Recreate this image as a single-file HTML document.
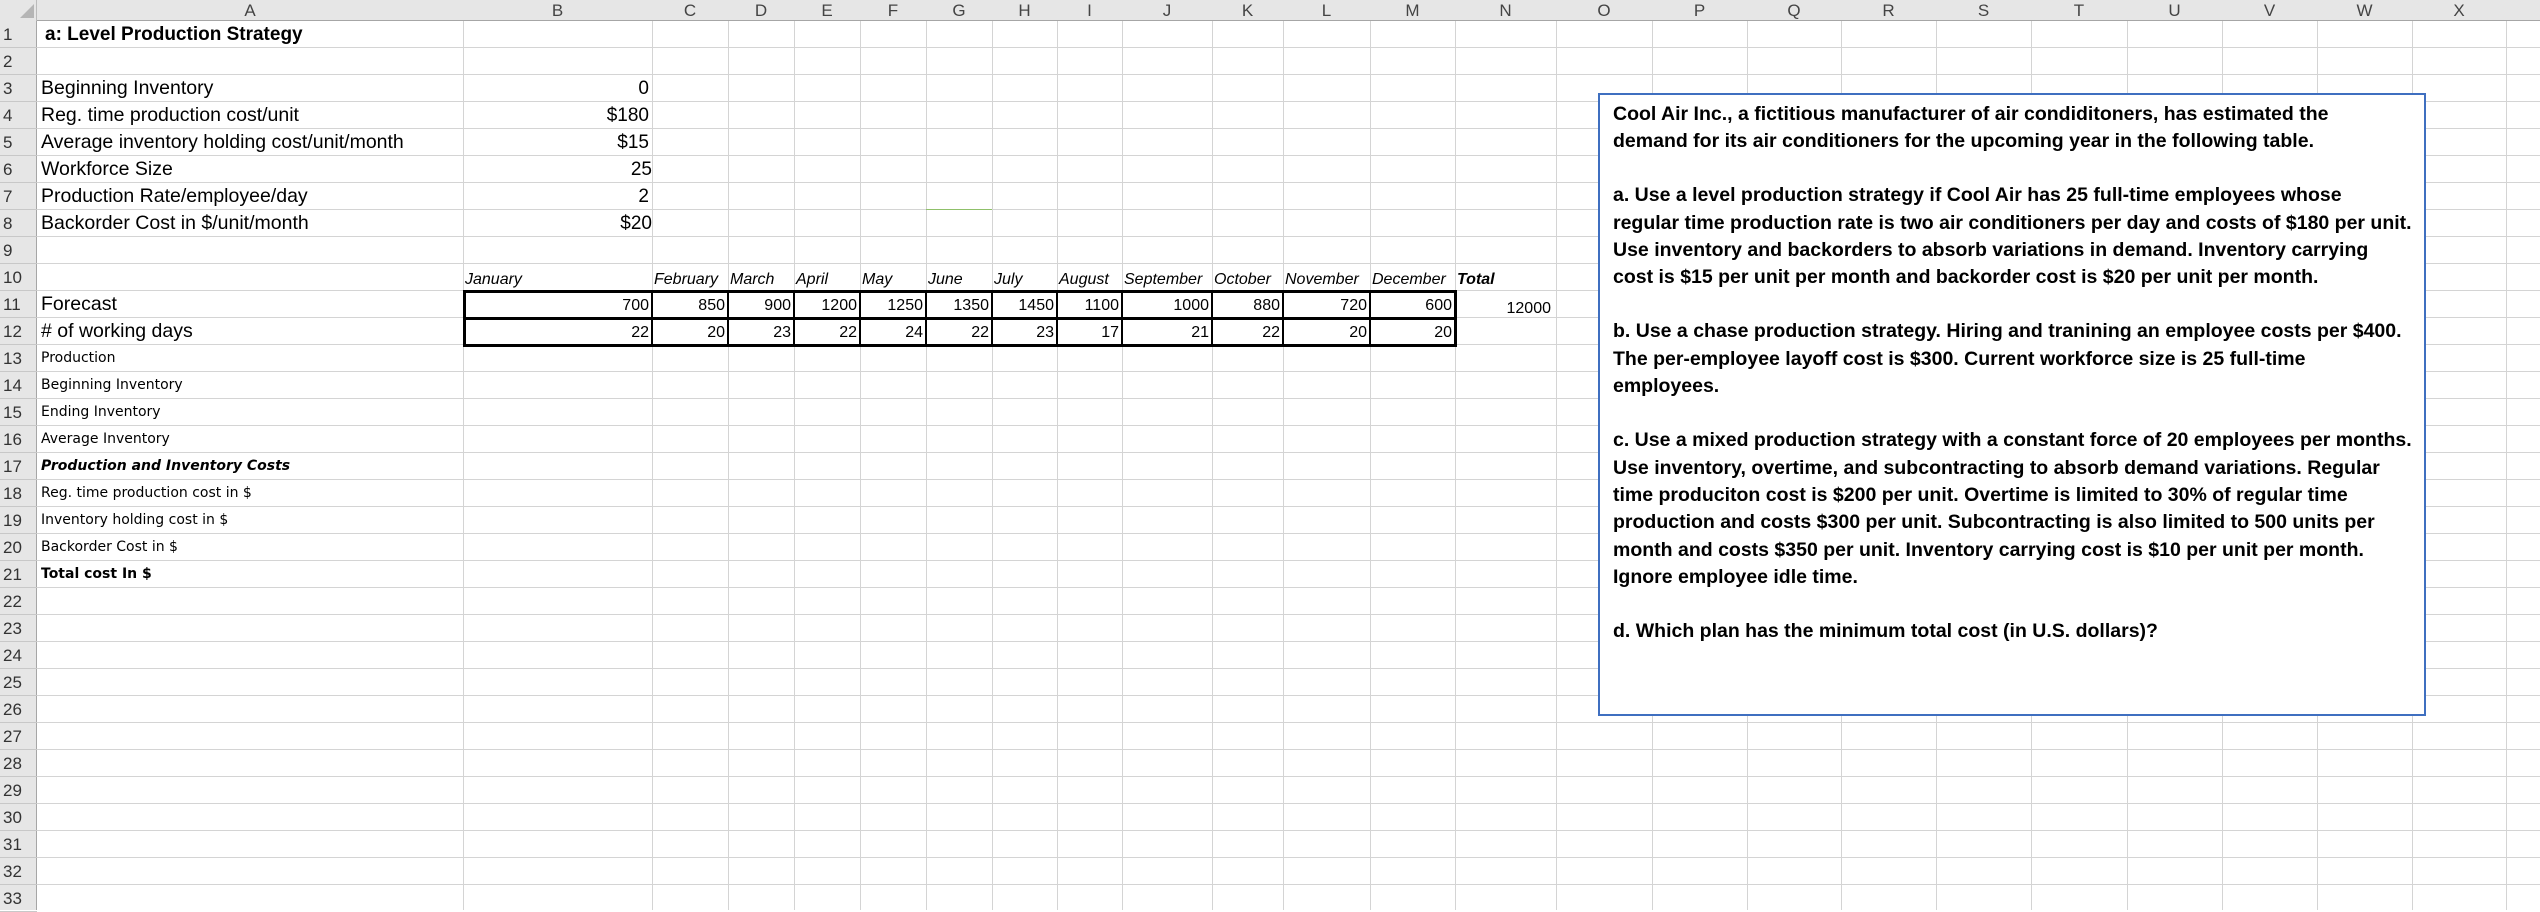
<!DOCTYPE html>
<html><head><meta charset="utf-8"><style>
*{margin:0;padding:0;box-sizing:border-box}
body{width:2540px;height:910px;overflow:hidden;background:#fff;position:relative;font-family:"Liberation Sans",sans-serif;color:#000}
.hl{position:absolute;left:0;top:21px;width:2540px;height:889px;background:repeating-linear-gradient(to bottom,transparent 0,transparent 26px,#d4d4d4 26px,#d4d4d4 27px)}
.v{position:absolute;top:0;width:1px;height:910px;background:#d4d4d4}
.hdr{position:absolute;left:0;top:0;width:2540px;height:21px;background:#e6e6e6;border-bottom:1px solid #a6a6a6}
.rh{position:absolute;left:0;top:21px;width:37px;height:889px;background:#e6e6e6;border-right:1px solid #a6a6a6}
.cl{position:absolute;top:0;height:21px;line-height:21px;text-align:center;font-size:17px;color:#444}
.rn{position:absolute;left:0;width:37px;height:27px;line-height:27px;font-size:17px;color:#333;padding-left:3px;border-bottom:1px solid #c8c8c8}
.t{position:absolute;white-space:nowrap;line-height:27px;height:27px}
.a{left:41px;font-size:19.5px}
.d{left:41px;font-size:14px;font-family:"DejaVu Sans",sans-serif}
.r{text-align:right;font-size:19px}
.m{font-size:16px;font-style:italic}
.n{font-size:16px;text-align:right;padding-right:3px}
.box{position:absolute;border:1px solid #3f6fc0;border-width:2px;background:#fff;left:1598px;top:93px;width:828px;height:623px}
.bt{position:absolute;left:1613px;font-weight:bold;font-size:19.5px;white-space:nowrap;line-height:27px}
</style></head><body>
<div class="hl"></div>
<div class="v" style="left:463px"></div><div class="v" style="left:652px"></div><div class="v" style="left:728px"></div><div class="v" style="left:794px"></div><div class="v" style="left:860px"></div><div class="v" style="left:926px"></div><div class="v" style="left:992px"></div><div class="v" style="left:1057px"></div><div class="v" style="left:1122px"></div><div class="v" style="left:1212px"></div><div class="v" style="left:1283px"></div><div class="v" style="left:1370px"></div><div class="v" style="left:1455px"></div><div class="v" style="left:1556px"></div><div class="v" style="left:1652px"></div><div class="v" style="left:1747px"></div><div class="v" style="left:1841px"></div><div class="v" style="left:1936px"></div><div class="v" style="left:2031px"></div><div class="v" style="left:2127px"></div><div class="v" style="left:2222px"></div><div class="v" style="left:2317px"></div><div class="v" style="left:2412px"></div><div class="v" style="left:2506px"></div>
<div class="hdr"></div>
<div style="position:absolute;left:0;top:0;width:37px;height:21px;background:#e6e6e6;border-right:1px solid #bbb"></div>
<div style="position:absolute;left:20px;top:4px;width:0;height:0;border-left:14px solid transparent;border-bottom:14px solid #b5b5b5"></div>
<div class="cl" style="left:37px;width:426px">A</div><div class="cl" style="left:463px;width:189px">B</div><div class="cl" style="left:652px;width:76px">C</div><div class="cl" style="left:728px;width:66px">D</div><div class="cl" style="left:794px;width:66px">E</div><div class="cl" style="left:860px;width:66px">F</div><div class="cl" style="left:926px;width:66px">G</div><div class="cl" style="left:992px;width:65px">H</div><div class="cl" style="left:1057px;width:65px">I</div><div class="cl" style="left:1122px;width:90px">J</div><div class="cl" style="left:1212px;width:71px">K</div><div class="cl" style="left:1283px;width:87px">L</div><div class="cl" style="left:1370px;width:85px">M</div><div class="cl" style="left:1455px;width:101px">N</div><div class="cl" style="left:1556px;width:96px">O</div><div class="cl" style="left:1652px;width:95px">P</div><div class="cl" style="left:1747px;width:94px">Q</div><div class="cl" style="left:1841px;width:95px">R</div><div class="cl" style="left:1936px;width:95px">S</div><div class="cl" style="left:2031px;width:96px">T</div><div class="cl" style="left:2127px;width:95px">U</div><div class="cl" style="left:2222px;width:95px">V</div><div class="cl" style="left:2317px;width:95px">W</div><div class="cl" style="left:2412px;width:94px">X</div>
<div class="rh"></div>
<div class="rn" style="top:21px">1</div><div class="rn" style="top:48px">2</div><div class="rn" style="top:75px">3</div><div class="rn" style="top:102px">4</div><div class="rn" style="top:129px">5</div><div class="rn" style="top:156px">6</div><div class="rn" style="top:183px">7</div><div class="rn" style="top:210px">8</div><div class="rn" style="top:237px">9</div><div class="rn" style="top:264px">10</div><div class="rn" style="top:291px">11</div><div class="rn" style="top:318px">12</div><div class="rn" style="top:345px">13</div><div class="rn" style="top:372px">14</div><div class="rn" style="top:399px">15</div><div class="rn" style="top:426px">16</div><div class="rn" style="top:453px">17</div><div class="rn" style="top:480px">18</div><div class="rn" style="top:507px">19</div><div class="rn" style="top:534px">20</div><div class="rn" style="top:561px">21</div><div class="rn" style="top:588px">22</div><div class="rn" style="top:615px">23</div><div class="rn" style="top:642px">24</div><div class="rn" style="top:669px">25</div><div class="rn" style="top:696px">26</div><div class="rn" style="top:723px">27</div><div class="rn" style="top:750px">28</div><div class="rn" style="top:777px">29</div><div class="rn" style="top:804px">30</div><div class="rn" style="top:831px">31</div><div class="rn" style="top:858px">32</div><div class="rn" style="top:885px">33</div>

<div class="t a" style="top:21px;font-weight:bold;left:45px;font-size:19px">a: Level Production Strategy</div>
<div class="t a" style="top:75px">Beginning Inventory</div>
<div class="t a" style="top:102px">Reg. time production cost/unit</div>
<div class="t a" style="top:129px">Average inventory holding cost/unit/month</div>
<div class="t a" style="top:156px">Workforce Size</div>
<div class="t a" style="top:183px">Production Rate/employee/day</div>
<div class="t a" style="top:210px">Backorder Cost in $/unit/month</div>
<div class="t a" style="top:291px">Forecast</div>
<div class="t a" style="top:318px"># of working days</div>
<div class="t d" style="top:345px">Production</div>
<div class="t d" style="top:372px">Beginning Inventory</div>
<div class="t d" style="top:399px">Ending Inventory</div>
<div class="t d" style="top:426px">Average Inventory</div>
<div class="t d" style="top:453px;font-weight:bold;font-style:italic">Production and Inventory Costs</div>
<div class="t d" style="top:480px">Reg. time production cost in $</div>
<div class="t d" style="top:507px">Inventory holding cost in $</div>
<div class="t d" style="top:534px">Backorder Cost in $</div>
<div class="t d" style="top:561px;font-weight:bold">Total cost In $</div>

<div class="t r" style="top:75px;left:463px;width:186px">0</div>
<div class="t r" style="top:102px;left:463px;width:186px">$180</div>
<div class="t r" style="top:129px;left:463px;width:186px">$15</div>
<div class="t r" style="top:156px;left:463px;width:189px">25</div>
<div class="t r" style="top:183px;left:463px;width:186px">2</div>
<div class="t r" style="top:210px;left:463px;width:189px">$20</div>

<div class="t m" style="top:266px;left:465px">January</div>
<div class="t m" style="top:266px;left:654px">February</div>
<div class="t m" style="top:266px;left:730px">March</div>
<div class="t m" style="top:266px;left:796px">April</div>
<div class="t m" style="top:266px;left:862px">May</div>
<div class="t m" style="top:266px;left:928px">June</div>
<div class="t m" style="top:266px;left:994px">July</div>
<div class="t m" style="top:266px;left:1059px">August</div>
<div class="t m" style="top:266px;left:1124px">September</div>
<div class="t m" style="top:266px;left:1214px">October</div>
<div class="t m" style="top:266px;left:1285px">November</div>
<div class="t m" style="top:266px;left:1372px">December</div>
<div class="t m" style="top:266px;left:1457px;font-weight:bold">Total</div>

<div style="position:absolute;left:463px;top:290px;width:994px;height:57px;border:3px solid #000"></div>
<div style="position:absolute;left:463px;top:317px;width:994px;height:3px;background:#000"></div>
<div style="position:absolute;left:651px;top:291px;width:2px;height:55px;background:#000"></div>
<div style="position:absolute;left:727px;top:291px;width:2px;height:55px;background:#000"></div>
<div style="position:absolute;left:793px;top:291px;width:2px;height:55px;background:#000"></div>
<div style="position:absolute;left:859px;top:291px;width:2px;height:55px;background:#000"></div>
<div style="position:absolute;left:925px;top:291px;width:2px;height:55px;background:#000"></div>
<div style="position:absolute;left:991px;top:291px;width:2px;height:55px;background:#000"></div>
<div style="position:absolute;left:1056px;top:291px;width:2px;height:55px;background:#000"></div>
<div style="position:absolute;left:1121px;top:291px;width:2px;height:55px;background:#000"></div>
<div style="position:absolute;left:1211px;top:291px;width:2px;height:55px;background:#000"></div>
<div style="position:absolute;left:1282px;top:291px;width:2px;height:55px;background:#000"></div>
<div style="position:absolute;left:1369px;top:291px;width:2px;height:55px;background:#000"></div>

<div class="t n" style="top:292px;left:463px;width:189px">700</div><div class="t n" style="top:292px;left:652px;width:76px">850</div><div class="t n" style="top:292px;left:728px;width:66px">900</div><div class="t n" style="top:292px;left:794px;width:66px">1200</div><div class="t n" style="top:292px;left:860px;width:66px">1250</div><div class="t n" style="top:292px;left:926px;width:66px">1350</div><div class="t n" style="top:292px;left:992px;width:65px">1450</div><div class="t n" style="top:292px;left:1057px;width:65px">1100</div><div class="t n" style="top:292px;left:1122px;width:90px">1000</div><div class="t n" style="top:292px;left:1212px;width:71px">880</div><div class="t n" style="top:292px;left:1283px;width:87px">720</div><div class="t n" style="top:292px;left:1370px;width:85px">600</div>
<div class="t n" style="top:295px;left:1455px;width:100px;padding-right:4px">12000</div>
<div class="t n" style="top:319px;left:463px;width:189px">22</div><div class="t n" style="top:319px;left:652px;width:76px">20</div><div class="t n" style="top:319px;left:728px;width:66px">23</div><div class="t n" style="top:319px;left:794px;width:66px">22</div><div class="t n" style="top:319px;left:860px;width:66px">24</div><div class="t n" style="top:319px;left:926px;width:66px">22</div><div class="t n" style="top:319px;left:992px;width:65px">23</div><div class="t n" style="top:319px;left:1057px;width:65px">17</div><div class="t n" style="top:319px;left:1122px;width:90px">21</div><div class="t n" style="top:319px;left:1212px;width:71px">22</div><div class="t n" style="top:319px;left:1283px;width:87px">20</div><div class="t n" style="top:319px;left:1370px;width:85px">20</div>

<div style="position:absolute;left:926px;top:209px;width:66px;height:1px;background:#8fc06a"></div>

<div class="box"></div>
<div class="bt" style="top:101px">Cool Air Inc., a fictitious manufacturer of air condiditoners, has estimated the</div>
<div class="bt" style="top:128px">demand for its air conditioners for the upcoming year in the following table.</div>
<div class="bt" style="top:182px">a. Use a level production strategy if Cool Air has 25 full-time employees whose</div>
<div class="bt" style="top:210px">regular time production rate is two air conditioners per day and costs of $180 per unit.</div>
<div class="bt" style="top:237px">Use inventory and backorders to absorb variations in demand. Inventory carrying</div>
<div class="bt" style="top:264px">cost is $15 per unit per month and backorder cost is $20 per unit per month.</div>
<div class="bt" style="top:318px">b. Use a chase production strategy. Hiring and tranining an employee costs per $400.</div>
<div class="bt" style="top:346px">The per-employee layoff cost is $300. Current workforce size is 25 full-time</div>
<div class="bt" style="top:373px">employees.</div>
<div class="bt" style="top:427px">c. Use a mixed production strategy with a constant force of 20 employees per months.</div>
<div class="bt" style="top:455px">Use inventory, overtime, and subcontracting to absorb demand variations. Regular</div>
<div class="bt" style="top:482px">time produciton cost is $200 per unit. Overtime is limited to 30% of regular time</div>
<div class="bt" style="top:509px">production and costs $300 per unit. Subcontracting is also limited to 500 units per</div>
<div class="bt" style="top:537px">month and costs $350 per unit. Inventory carrying cost is $10 per unit per month.</div>
<div class="bt" style="top:564px">Ignore employee idle time.</div>
<div class="bt" style="top:618px">d. Which plan has the minimum total cost (in U.S. dollars)?</div>
</body></html>
